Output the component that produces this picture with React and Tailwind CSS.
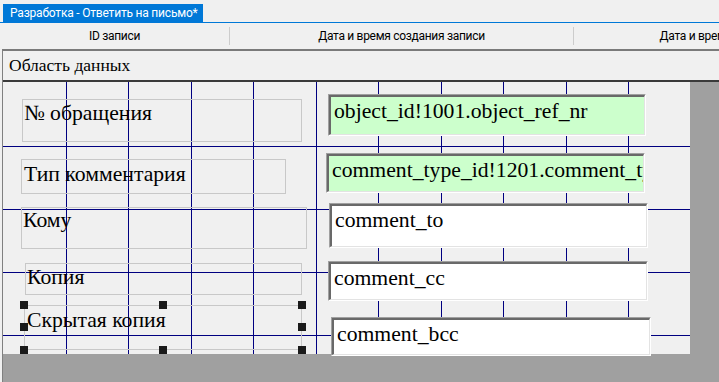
import React from "react";

const uiFont = { fontFamily: 'Roboto, "Noto Sans", sans-serif' };

const Field = ({ className, text, green }) => {
  return (
    <div
      className={`absolute border border-t-[#a0a0a0] border-l-[#a0a0a0] border-b-white border-r-white ${className}`}
    >
      <div
        className={`h-full w-full overflow-hidden whitespace-nowrap border-t-2 border-l-2 border-t-[#696969] border-l-[#696969] border-b border-r border-b-[#e3e3e3] border-r-[#e3e3e3] pl-[3px] pt-[2px] font-['Liberation_Serif',serif] text-[21.7px] leading-[24px] text-black ${
          green ? "bg-[#ccffcc]" : "bg-white"
        }`}
      >
        {text}
      </div>
    </div>
  );
};

const Label = ({ className, text }) => {
  return (
    <div
      className={`absolute whitespace-nowrap border border-[#c8c8c8] font-['Liberation_Serif',serif] text-[21.7px] leading-[24px] text-black ${className}`}
    >
      {text}
    </div>
  );
};

const Handle = ({ className }) => (
  <div className={`absolute h-[8px] w-[8px] bg-[#1a1a1a] ${className}`} />
);

const DesignCanvas = () => {
  const cols = [1, 2, 3, 4, 5, 6, 7, 8, 9, 10];
  const rows = [1, 2, 3, 4];

  return (
    <div className="relative h-[272px] w-[687px] shrink-0 bg-[#f0f0f0]">
      {/* snap grid */}
      {cols.map((k) => (
        <div
          key={`c${k}`}
          className="absolute top-0 h-full w-px bg-[#000080]"
          style={{ left: Math.round(62.5 * k) }}
        />
      ))}
      {rows.map((k) => (
        <div
          key={`r${k}`}
          className="absolute left-0 h-px w-full bg-[#000080]"
          style={{ top: 63 * k + 1 }}
        />
      ))}

      <Label className="left-[19px] top-[17px] h-[43px] w-[280px] pl-[1px] pt-[1px]" text="№ обращения" />
      <Label className="left-[18px] top-[77px] h-[35px] w-[265px] pl-[2px] pt-[2px]" text="Тип комментария" />
      <Label className="left-[18px] top-[125px] h-[42px] w-[286px] pl-[1px] pt-0" text="Кому" />
      <Label className="left-[22px] top-[181px] h-[32px] w-[277px] pl-[1px] pt-[1px]" text="Копия" />
      <Label className="left-[21px] top-[223px] h-[45px] w-[278px] pl-[2px] pt-[2px]" text="Скрытая копия" />

      <Field className="left-[325px] top-[12px] h-[42px] w-[318px]" text="object_id!1001.object_ref_nr" green />
      <Field className="left-[323px] top-[71px] h-[40px] w-[319px]" text="comment_type_id!1201.comment_type" green />
      <Field className="left-[326px] top-[121px] h-[45px] w-[319px]" text="comment_to" />
      <Field className="left-[325px] top-[179px] h-[40px] w-[320px]" text="comment_cc" />
      <Field className="left-[328px] top-[235px] h-[39px] w-[320px]" text="comment_bcc" />

      {/* selection handles of "Скрытая копия" */}
      <Handle className="left-[17px] top-[219px]" />
      <Handle className="left-[156px] top-[219px]" />
      <Handle className="left-[295px] top-[219px]" />
      <Handle className="left-[17px] top-[241px]" />
      <Handle className="left-[295px] top-[241px]" />
      <Handle className="left-[17px] top-[264px]" />
      <Handle className="left-[156px] top-[264px]" />
      <Handle className="left-[295px] top-[264px]" />
    </div>
  );
};

export default function App() {
  return (
    <div className="flex h-[382px] w-[719px] flex-col overflow-hidden bg-[#f0f0f0]">
      {/* tab strip */}
      <div className="flex h-[23px] shrink-0 items-end border-b border-[#0078d7] pl-[3px]" style={uiFont}>
        <div className="flex h-[18px] w-[200px] items-center whitespace-nowrap bg-[#0078d7] pl-[7px] text-[12px] tracking-[-0.2px] text-white">
          Разработка - Ответить на письмо*
        </div>
      </div>

      {/* column headers */}
      <div className="flex h-[26px] shrink-0 text-[12px] tracking-[-0.3px] text-black" style={uiFont}>
        <div className="flex w-[229px] shrink-0 items-center justify-center">ID записи</div>
        <div className="my-[4px] w-px shrink-0 bg-[#cccccc]" />
        <div className="flex w-[343px] shrink-0 items-center justify-center whitespace-nowrap">
          Дата и время создания записи
        </div>
        <div className="my-[4px] w-px shrink-0 bg-[#cccccc]" />
        <div className="flex w-[346px] shrink-0 items-center justify-center whitespace-nowrap">
          Дата и время изменения записи
        </div>
      </div>

      {/* data area */}
      <div className="flex flex-1 flex-col pl-[2px]">
        <div className="flex flex-1 flex-col border-l border-t-2 border-l-[#808080] border-t-[#7a7a7a]">
          <div className="flex h-[31px] shrink-0 items-center border-b-2 border-[#3a3a3a] pl-[6px] font-['Liberation_Serif',serif] text-[17.5px] text-black">
            Область данных
          </div>
          <div className="flex flex-1 flex-col bg-[#a0a0a0]">
            <div className="flex">
              <DesignCanvas />
              <div className="flex-1" />
            </div>
            <div className="flex-1" />
          </div>
        </div>
      </div>
    </div>
  );
}
